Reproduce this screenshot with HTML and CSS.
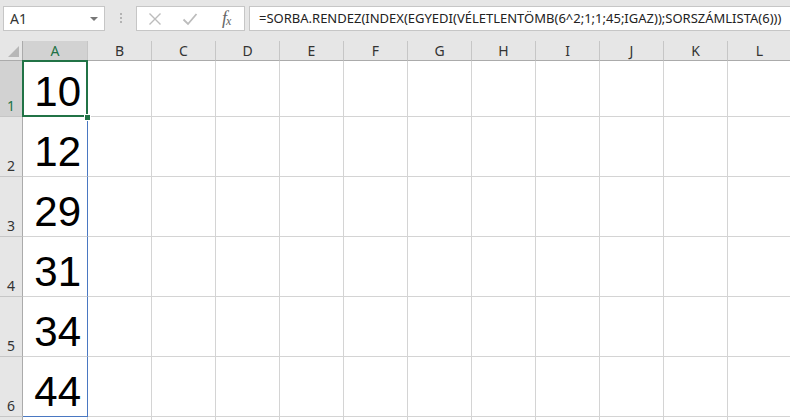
FILE: index.html
```html
<!DOCTYPE html>
<html lang="hu">
<head>
  <meta charset="UTF-8" />
  <title>Munkafüzet1 - Excel</title>
  <link rel="stylesheet" href="styles.css">
</head>
<body>

<div class="formula-bar">
  <div class="name-box">
    <span>A1</span>
    <svg class="caret" width="8" height="4" viewBox="0 0 8 4"><path d="M0 0h8L4 4z" fill="#777"/></svg>
  </div>
  <div class="grip"><i></i><i></i><i></i></div>
  <div class="fx-buttons">
    <svg width="14" height="14" viewBox="0 0 14 14"><path d="M1.5 1.5l11 11M12.5 1.5l-11 11" stroke="#bcbcbc" stroke-width="1.4" fill="none"/></svg>
    <svg width="16" height="14" viewBox="0 0 16 14"><path d="M1.5 7.5l4.5 4.5 8.5-10" stroke="#bcbcbc" stroke-width="1.8" fill="none"/></svg>
    <span class="fx">f<sub>x</sub></span>
  </div>
  <div class="formula-input">=SORBA.RENDEZ(INDEX(EGYEDI(VÉLETLENTÖMB(6^2;1;1;45;IGAZ));SORSZÁMLISTA(6)))</div>
</div>

<div class="sheet">
  <div class="corner"><span></span></div>
  <div class="h sel">A</div><div class="h">B</div><div class="h">C</div><div class="h">D</div><div class="h">E</div><div class="h">F</div><div class="h">G</div><div class="h">H</div><div class="h">I</div><div class="h">J</div><div class="h">K</div><div class="h">L</div>

  <div class="r sel">1</div>
  <div class="c num spill active">10<b class="handle"></b></div>
  <div class="c"></div><div class="c"></div><div class="c"></div><div class="c"></div><div class="c"></div><div class="c"></div><div class="c"></div><div class="c"></div><div class="c"></div><div class="c"></div><div class="c"></div>

  <div class="r">2</div>
  <div class="c num spill">12</div>
  <div class="c"></div><div class="c"></div><div class="c"></div><div class="c"></div><div class="c"></div><div class="c"></div><div class="c"></div><div class="c"></div><div class="c"></div><div class="c"></div><div class="c"></div>

  <div class="r">3</div>
  <div class="c num spill">29</div>
  <div class="c"></div><div class="c"></div><div class="c"></div><div class="c"></div><div class="c"></div><div class="c"></div><div class="c"></div><div class="c"></div><div class="c"></div><div class="c"></div><div class="c"></div>

  <div class="r">4</div>
  <div class="c num spill">31</div>
  <div class="c"></div><div class="c"></div><div class="c"></div><div class="c"></div><div class="c"></div><div class="c"></div><div class="c"></div><div class="c"></div><div class="c"></div><div class="c"></div><div class="c"></div>

  <div class="r">5</div>
  <div class="c num spill">34</div>
  <div class="c"></div><div class="c"></div><div class="c"></div><div class="c"></div><div class="c"></div><div class="c"></div><div class="c"></div><div class="c"></div><div class="c"></div><div class="c"></div><div class="c"></div>

  <div class="r">6</div>
  <div class="c num spill last">44</div>
  <div class="c"></div><div class="c"></div><div class="c"></div><div class="c"></div><div class="c"></div><div class="c"></div><div class="c"></div><div class="c"></div><div class="c"></div><div class="c"></div><div class="c"></div>

  <div class="r"></div>
  <div class="c"></div><div class="c"></div><div class="c"></div><div class="c"></div><div class="c"></div><div class="c"></div><div class="c"></div><div class="c"></div><div class="c"></div><div class="c"></div><div class="c"></div><div class="c"></div>
</div>

</body>
</html>
```

FILE: styles.css
```css
:root {
  --toolbar: #e6e6e6;
  --header: #e6e6e6;
  --header-sel: #d2d2d2;
  --grid: #d4d4d4;
  --green: #217346;
  --spill: #4a78c2;
  --text: #333;
}

body {
  margin: 0;
  width: 790px;
  height: 420px;
  overflow: hidden;
  background: #fff;
  font-family: 'Noto Sans', sans-serif;
  color: var(--text);
}

/* formula bar */
.formula-bar {
  height: 41px;
  box-sizing: border-box;
  background: var(--toolbar);
  display: flex;
  align-items: flex-start;
  padding: 6px 0 0 3px;
}

.name-box {
  flex-shrink: 0;
  width: 102px;
  height: 25px;
  box-sizing: border-box;
  background: #fff;
  border: 1px solid #c6c6c6;
  display: flex;
  align-items: center;
  justify-content: space-between;
  padding: 0 6px 0 6px;
  font-size: 14px;
}

.name-box .caret {
  margin-top: 1px;
}

.grip {
  flex-shrink: 0;
  width: 31px;
  display: flex;
  flex-direction: column;
  align-items: center;
  gap: 2px;
  padding-top: 7px;
}

.grip i {
  width: 2px;
  height: 2px;
  background: #b3b3b3;
}

.fx-buttons {
  flex-shrink: 0;
  width: 109px;
  height: 25px;
  box-sizing: border-box;
  background: #fff;
  border: 1px solid #c6c6c6;
  display: flex;
  align-items: center;
  padding-left: 11px;
  gap: 20px;
}

.fx {
  font-family: 'Liberation Serif', serif;
  font-style: italic;
  font-size: 18px;
  line-height: 20px;
  color: #666;
  margin-left: 4px;
}

.fx sub {
  font-size: 12px;
  vertical-align: 0;
  position: relative;
  top: 1px;
  margin-left: -1px;
}

.formula-input {
  flex: 1;
  min-width: 0;
  margin-left: 4px;
  margin-right: -20px;
  height: 25px;
  box-sizing: border-box;
  background: #fff;
  border: 1px solid #c6c6c6;
  padding-left: 9px;
  font-size: 13px;
  line-height: 23px;
  white-space: nowrap;
  color: #222;
}

/* sheet grid */
.sheet {
  display: grid;
  grid-template-columns: 23px 65px repeat(11, 64px);
  grid-template-rows: 20px 56px repeat(5, 60px) 20px;
}

.corner {
  background: var(--header);
  border-right: 1px solid #ababab;
  border-bottom: 1px solid #ababab;
  display: flex;
  justify-content: flex-end;
  align-items: flex-end;
  padding: 0 3px 3px 0;
}

.corner span {
  width: 11px;
  height: 11px;
  background: #b7b7b7;
  clip-path: polygon(100% 0, 100% 100%, 0 100%);
}

.h {
  background: var(--header);
  border-right: 1px solid #c6c6c6;
  border-bottom: 1px solid #ababab;
  text-align: center;
  font-size: 14px;
  line-height: 19px;
}

.r {
  background: var(--header);
  border-right: 1px solid #ababab;
  border-bottom: 1px solid #c6c6c6;
  display: flex;
  align-items: flex-end;
  justify-content: center;
  font-size: 14px;
  line-height: 19px;
  padding-bottom: 1px;
}

.sel {
  background: var(--header-sel);
  color: var(--green);
}

.c {
  border-right: 1px solid var(--grid);
  border-bottom: 1px solid var(--grid);
}

.num {
  display: flex;
  align-items: flex-end;
  justify-content: flex-end;
  padding-right: 6px;
  font-family: 'Liberation Sans', sans-serif;
  font-size: 42px;
  line-height: 48px;
  color: #000;
}

.spill {
  border-right-color: var(--spill);
}

.spill.last {
  border-bottom-color: var(--spill);
}

.active {
  position: relative;
}

.active::after {
  content: "";
  position: absolute;
  left: -1px;
  top: -1px;
  right: -1px;
  bottom: -1px;
  border: 2px solid var(--green);
}

.handle {
  position: absolute;
  left: 61px;
  top: 53px;
  width: 5px;
  height: 5px;
  background: var(--green);
  border: 1px solid #fff;
  z-index: 2;
}
```
